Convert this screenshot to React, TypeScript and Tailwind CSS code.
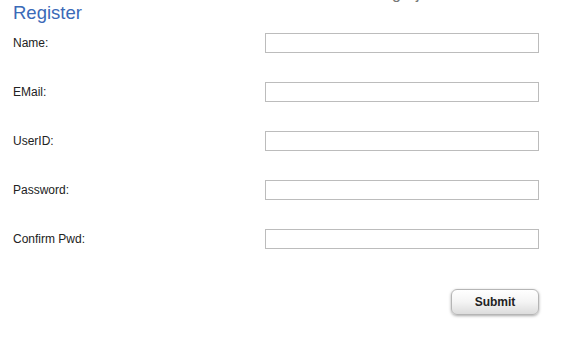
import React from "react";

const fields = ["Name:", "EMail:", "UserID:", "Password:", "Confirm Pwd:"];

export default function App() {
  return (
    <div className="w-[575px] h-[345px] bg-white relative overflow-hidden" style={{ fontFamily: '"Liberation Sans", Arial, sans-serif' }}>
      <div className="absolute left-[392px] top-[-14px] text-[16px] text-[#777] leading-none">g</div>
      <div className="absolute left-[416px] top-[-14px] text-[16px] text-[#777] leading-none">j</div>
      <div className="pl-[13px] pt-0">
        <div className="h-[33px] text-[18.5px] leading-[25px] text-[#3a6ab8]">Register</div>
        <div className="flex flex-col gap-[29px]">
          {fields.map((f) => (
            <div key={f} className="flex items-center h-[20px]">
              <div className="w-[252px] text-[12px] text-[#222] leading-none pb-[1px]">{f}</div>
              <input className="w-[274px] h-[20px] border border-[#bcbcbc] bg-white outline-none" />
            </div>
          ))}
        </div>
        <div className="flex pl-[438px] pt-[40px]">
          <button className="w-[88px] h-[26px] rounded-[6px] border border-[#b5b5b5] bg-gradient-to-b from-white via-[#f4f4f4] to-[#dcdcdc] shadow-[0_1px_3px_rgba(0,0,0,0.35)] text-[12px] font-bold text-[#222]">
            Submit
          </button>
        </div>
      </div>
    </div>
  );
}
